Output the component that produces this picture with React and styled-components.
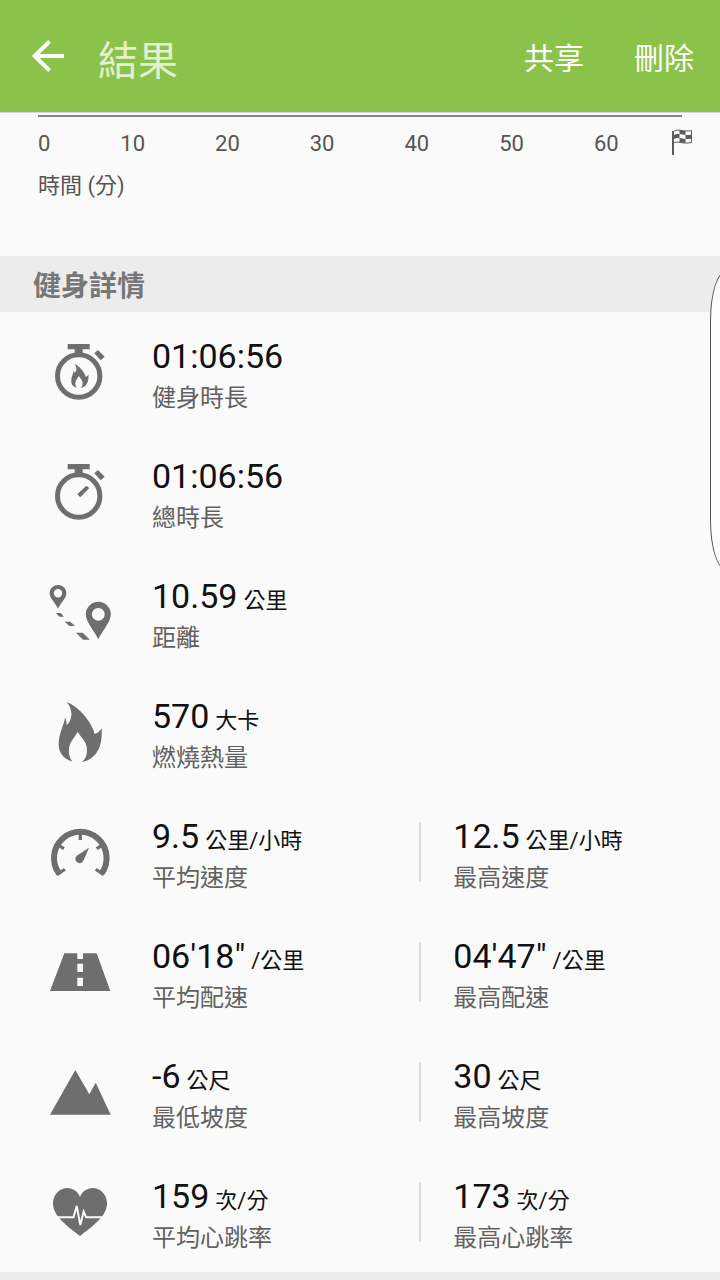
import React from "react"
import styled, { createGlobalStyle } from "styled-components"

const GlobalStyle = createGlobalStyle`
  * {
    box-sizing: border-box;
  }

  body {
    margin: 0;
    background-color: #fafafa;
    font-family: Roboto, "Noto Sans CJK TC", sans-serif;
    color: #111;
  }

  h1, h2, p, ul {
    margin: 0;
    padding: 0;
  }
`

const Page = styled.div`
  overflow-x: clip;
`

const AppBar = styled.header`
  display: flex;
  align-items: center;
  position: sticky;
  top: 0;
  height: 112px;
  padding: 0 26px 0 32px;
  background-color: #8bc34a;
  box-shadow: 0 1px 0 #dccfe4;
  z-index: 10;
`

const BackButton = styled.button`
  display: flex;
  padding: 0;
  border: none;
  background: transparent;
  cursor: pointer;
`

const AppTitle = styled.h1`
  flex: 1;
  margin-left: 34px;
  padding-top: 12px;
  font-size: 40px;
  line-height: 48px;
  font-weight: 400;
  color: #e3f1d1;
`

const Actions = styled.div`
  display: flex;
  gap: 50px;
  padding-top: 6px;
`

const ActionButton = styled.button`
  padding: 0;
  border: none;
  background: transparent;
  font-family: inherit;
  font-size: 30px;
  line-height: 40px;
  color: #fff;
  cursor: pointer;
`

const ChartFooter = styled.section`
  height: 144px;
  padding: 3px 38px 0;
  color: #555;
`

const Axis = styled.div`
  display: grid;
  grid-template-columns: repeat(6, 10fr) 8fr 0;
  padding-top: 15px;
  border-top: 2px solid #858588;
`

const Tick = styled.div`
  display: flex;
  align-items: flex-end;
  justify-content: ${props => (props.first ? "flex-start" : "center")};
  width: 0;
  height: 24px;
  font-size: 22px;
  line-height: 24px;

  & > svg {
    flex-shrink: 0;
  }
`

const AxisTitle = styled.p`
  margin-top: 16px;
  font-size: 22px;
  line-height: 28px;
`

const SectionTitle = styled.h2`
  padding: 11px 33px 5px;
  background-color: #ececec;
  font-size: 28px;
  line-height: 40px;
  font-weight: 700;
  color: #777;
`

const Rows = styled.ul`
  list-style: none;
`

const Row = styled.li`
  display: grid;
  grid-template-columns: 152px 8fr 9fr;
  height: 120px;
`

const IconCell = styled.div`
  padding: 28px 0 0 48px;

  & > svg {
    display: block;
    fill: #6e6e6e;
  }
`

const Metric = styled.div`
  padding-top: 24px;
`

const SecondMetric = styled.div`
  display: flex;
  gap: 32px;

  &::before {
    content: "";
    width: 2px;
    height: 60px;
    margin-top: 30px;
    background-color: #dcdcdc;
  }
`

const Value = styled.p`
  height: 40px;
  font-size: 34px;
  line-height: 40px;
  white-space: nowrap;
`

const Unit = styled.span`
  margin-left: 6px;
  font-size: 22px;
  line-height: 24px;
`

const Label = styled.p`
  margin-top: 6px;
  font-size: 24px;
  line-height: 32px;
  color: #626262;
`

const Divider = styled.div`
  height: 8px;
  background-color: #ececec;
`

// pull-out handle of the edge panel, half of its curve is off screen
const EdgeHandle = styled.div`
  position: fixed;
  top: 271px;
  right: -7px;
  width: 17px;
  height: 299px;
  border: 1px solid #555;
  border-right: none;
  border-radius: 16px 0 0 16px / 50px 0 0 50px;
  background-color: #fdfdfd;
  z-index: 5;
`

const BackArrow = () => (
  <svg width="32" height="32" viewBox="0 0 32 32" fill="none" stroke="#fff">
    <path d="M17.5 1.5 2.5 16l15 14.5M2.5 16H32" strokeWidth="4" />
  </svg>
)

const FinishFlag = () => (
  <svg width="22" height="28" viewBox="0 0 22 28" fill="#5c5c5c">
    <path d="M1 3h2v24H1z" />
    <path
      d="M2.5 3.5c5-3.5 9 1 18-1v12c-9 2-13-2-18 .5z"
      fill="none"
      stroke="#5c5c5c"
    />
    <path d="M8.5 2c2 .2 3.500 1 6 1v4c-2.500 0-4-.8-6-1z" />
    <path d="M3 7c2-1.200 3.500-1.200 5.500-1v4c-2-.2-3.500 0-5.500 1z" />
    <path d="M14.5 7c2 .2 4 0 6-.5v4c-2 .5-4 .7-6 .5z" />
    <path d="M8.5 10c2 .2 4 1 6 1v4c-2.500 0-4-.8-6-1z" />
  </svg>
)

const Icon = ({ children }) => (
  <svg width="64" height="64" viewBox="0 0 64 64" aria-hidden="true">
    {children}
  </svg>
)

const FLAME =
  "M18.7 2C30 6 44 22 46.7 34c3.3-1 5.8-3 7-6 .8 14-1.7 30-20 34.3C39 58 39.3 52 38.7 47 38 41 32 36.5 29.7 31.7 27 37 21.5 42 21 48.5c-.5 5.500.5 9.500 3.300 13.200C13 58 10.3 50 10.7 43 11 33 16 25 17 17.7c1.500 2.300 1.500 4.800 1.700 7.300C24.500 20 25.500 10 18.700 2z"

const WatchBody = () => (
  <>
    <path d="M19.7 4h22v5.300h-7v5h-8v-5h-7z" />
    <path d="M50 10l6.700 6.700-4 3.600-6.400-7z" />
    <circle cx="30.7" cy="36" r="21.2" fill="none" stroke="#6e6e6e" strokeWidth="5" />
  </>
)

const ActiveTimeIcon = () => (
  <Icon>
    <WatchBody />
    <path d={FLAME} transform="translate(19 23.2) scale(.4)" />
  </Icon>
)

const TotalTimeIcon = () => (
  <Icon>
    <WatchBody />
    <path d="M29.3 34.3l9-8.600 3 2.300-9 9.300z" />
  </Icon>
)

const DistanceIcon = () => (
  <Icon>
    <path
      fillRule="evenodd"
      d="M10 4.9a8.400 8.400 0 0 1 8.400 8.400c0 4.700-5 8.700-8.400 15.400-3.400-6.700-8.400-10.700-8.400-15.400A8.400 8.400 0 0 1 10 4.9zm0 4.200a4.200 4.200 0 1 0 0 8.400 4.200 4.200 0 0 0 0-8.400z"
    />
    <path
      fillRule="evenodd"
      d="M50.3 21.8a12.500 12.500 0 0 1 12.500 12.500c0 7.500-7.500 15-12.500 25-5-10-12.500-17.500-12.500-25a12.500 12.500 0 0 1 12.500-12.500zm0 6.100a6.400 6.400 0 1 0 0 12.800 6.400 6.400 0 0 0 0-12.800z"
    />
    <path d="M8 33h4.700l3.300 3.700h-4.700zM16.7 41.7h5.600L27 46h-5.700zM28 52.7h6.700l7.300 7h-7z" />
  </Icon>
)

const FlameIcon = () => (
  <Icon>
    <path d={FLAME} />
  </Icon>
)

const SpeedIcon = () => (
  <Icon>
    <g fill="none" stroke="#6e6e6e">
      <path d="M11 53.5a26.300 26.300 0 1 1 42.600 0" strokeWidth="6" />
      <path
        d="M8.9 54.7l8-5.500M55.7 54.7l-8-5.500M32.3 12v8M11 25.7l5 3M53.6 25.7l-5 3"
        strokeWidth="3.2"
      />
    </g>
    <path d="M41 27.7l-5.500 12.800a4.200 4.200 0 1 1-6.700-4.700z" />
  </Icon>
)

const PaceIcon = () => (
  <Icon>
    <path
      fillRule="evenodd"
      d="M16.3 13.3h13V19H35v-5.700h13.700L62.3 51H2zM29.3 23.7V32H35v-8.300zM29.3 37.7V46H35v-8.300z"
    />
  </Icon>
)

const SlopeIcon = () => (
  <Icon>
    <path d="M2 54.7L27.3 10l14 24.300 6.400-11.600 15 32z" />
  </Icon>
)

const HeartIcon = () => (
  <Icon>
    <path d="M32 56C22 48 5 37 5 23.5 5 14.5 11.5 8 19.3 8 25 8 30 11.5 32 17c2-5.500 7-9 12.700-9C52.5 8 59 14.5 59 23.5 59 37 42 48 32 56z" />
    <path
      d="M9 37.3h16.500L28.7 26l3.600 19 3.400-13.500 2.500 5.800H56"
      fill="none"
      stroke="#fafafa"
      strokeWidth="2"
    />
  </Icon>
)

const metrics = [
  { icon: ActiveTimeIcon, items: [["01:06:56", "", "健身時長"]] },
  { icon: TotalTimeIcon, items: [["01:06:56", "", "總時長"]] },
  { icon: DistanceIcon, items: [["10.59", "公里", "距離"]] },
  { icon: FlameIcon, items: [["570", "大卡", "燃燒熱量"]] },
  {
    icon: SpeedIcon,
    items: [
      ["9.5", "公里/小時", "平均速度"],
      ["12.5", "公里/小時", "最高速度"],
    ],
  },
  {
    icon: PaceIcon,
    items: [
      ["06'18\"", "/公里", "平均配速"],
      ["04'47\"", "/公里", "最高配速"],
    ],
  },
  {
    icon: SlopeIcon,
    items: [
      ["-6", "公尺", "最低坡度"],
      ["30", "公尺", "最高坡度"],
    ],
  },
  {
    icon: HeartIcon,
    items: [
      ["159", "次/分", "平均心跳率"],
      ["173", "次/分", "最高心跳率"],
    ],
  },
]

const MetricText = ({ item: [value, unit, label] }) => (
  <Metric>
    <Value>
      {value}
      {unit && <Unit>{unit}</Unit>}
    </Value>
    <Label>{label}</Label>
  </Metric>
)

const App = () => (
  <Page>
    <GlobalStyle />
    <AppBar>
      <BackButton type="button" aria-label="返回">
        <BackArrow />
      </BackButton>
      <AppTitle>結果</AppTitle>
      <Actions>
        <ActionButton type="button">共享</ActionButton>
        <ActionButton type="button">刪除</ActionButton>
      </Actions>
    </AppBar>

    <ChartFooter>
      <Axis>
        {[0, 10, 20, 30, 40, 50, 60].map(minute => (
          <Tick key={minute} first={minute === 0 ? 1 : undefined}>
            {minute}
          </Tick>
        ))}
        <Tick>
          <FinishFlag />
        </Tick>
      </Axis>
      <AxisTitle>時間 (分)</AxisTitle>
    </ChartFooter>

    <SectionTitle>健身詳情</SectionTitle>
    <Rows>
      {metrics.map(({ icon: MetricIcon, items }) => (
        <Row key={items[0][2]}>
          <IconCell>
            <MetricIcon />
          </IconCell>
          <MetricText item={items[0]} />
          {items[1] && (
            <SecondMetric>
              <MetricText item={items[1]} />
            </SecondMetric>
          )}
        </Row>
      ))}
    </Rows>
    <Divider />
    <EdgeHandle />
  </Page>
)

export default App
